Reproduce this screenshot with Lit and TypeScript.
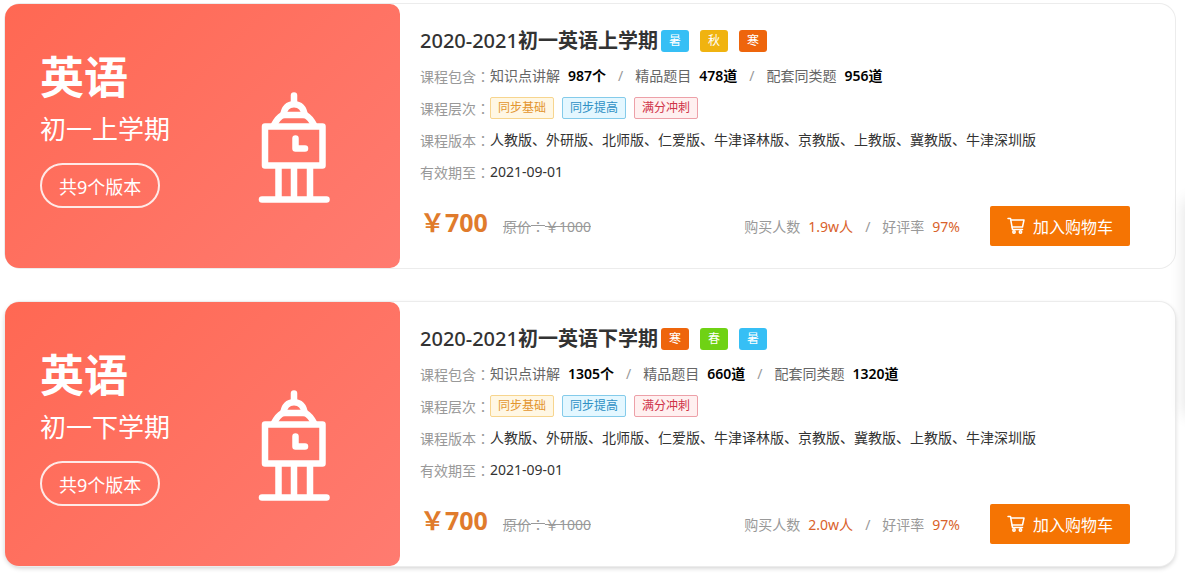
import { LitElement, html, css, svg } from "lit";
import { customElement, property } from "lit/decorators.js";

type Season = "summer" | "autumn" | "winter" | "spring";

interface Course {
  term: string;
  years: string;
  title: string;
  seasons: Season[];
  contents: { name: string; count: string }[];
  editions: string;
  buyers: string;
  raised?: boolean;
}

const SEASON_TEXT: Record<Season, string> = {
  summer: "暑",
  autumn: "秋",
  winter: "寒",
  spring: "春",
};

const COURSES: Course[] = [
  {
    term: "初一上学期",
    years: "2020-2021",
    title: "初一英语上学期",
    seasons: ["summer", "autumn", "winter"],
    contents: [
      { name: "知识点讲解", count: "987个" },
      { name: "精品题目", count: "478道" },
      { name: "配套同类题", count: "956道" },
    ],
    editions: "人教版、外研版、北师版、仁爱版、牛津译林版、京教版、上教版、冀教版、牛津深圳版",
    buyers: "1.9w人",
  },
  {
    term: "初一下学期",
    years: "2020-2021",
    title: "初一英语下学期",
    seasons: ["winter", "spring", "summer"],
    contents: [
      { name: "知识点讲解", count: "1305个" },
      { name: "精品题目", count: "660道" },
      { name: "配套同类题", count: "1320道" },
    ],
    editions: "人教版、外研版、北师版、仁爱版、牛津译林版、京教版、冀教版、上教版、牛津深圳版",
    buyers: "2.0w人",
    raised: true,
  },
];

const towerIcon = svg`<g fill="none" stroke="#fff" stroke-width="6.5" stroke-linecap="round" stroke-linejoin="round">
  <path d="M36 3.500V11"/>
  <path d="M25.500 23C26 16 30 12.200 36 12.200S46 16 46.500 23"/>
  <path d="M16 33C18.500 28 21 25 24.500 23H47.500C51 25 53.500 28 56 33"/>
  <path d="M7 34.500H64.500V73.500H7Z"/>
  <path d="M37.500 46.500V56.500H47"/>
  <path d="M20.500 75V105M36 75V105M52 75V105"/>
  <path d="M4 107.500H68.500"/>
</g>`;

const cartIcon = svg`<g fill="none" stroke="currentColor" stroke-width="1.500" stroke-linecap="round" stroke-linejoin="round">
  <path d="M1 1.500H3.500L5.500 12.500H15.500"/>
  <path d="M4 3H17L15.500 10H5"/>
  <circle cx="7" cy="15" r="1.200"/>
  <circle cx="13.500" cy="15" r="1.200"/>
</g>`;

@customElement("course-card")
export class CourseCard extends LitElement {
  @property({ attribute: false }) course!: Course;

  static styles = css`
    :host {
      display: block;
    }
    .card {
      display: grid;
      grid-template-columns: 395px minmax(0, 1fr);
      border-radius: 16px;
      background: #fff;
      box-shadow: 0 0 0 1px #ececec;
    }
    .raised {
      box-shadow: 0 0 0 1px #ececec, 0 2px 5px rgba(0, 0, 0, 0.2);
    }
    .cover {
      display: flex;
      justify-content: space-between;
      padding: 43px 70px 0 35px;
      border-radius: 14px 10px 10px 14px;
      background: linear-gradient(135deg, #ff6853, #ff7b70);
      color: #fff;
    }
    .subject {
      margin: 0;
      font-size: 44px;
      line-height: 60px;
      font-weight: 700;
    }
    .term {
      margin: 0 0 12px;
      font-size: 26px;
      line-height: 44px;
    }
    .versions {
      display: inline-block;
      padding: 3px 17px 0;
      border: 2px solid rgba(255, 255, 255, 0.85);
      border-radius: 23px;
      font-size: 18px;
      line-height: 38px;
    }
    .tower {
      width: 72px;
      height: 112px;
      margin-top: 45px;
      flex: none;
    }
    .info {
      padding: 18px 45px 22px 20px;
      font-size: 14px;
      color: #333;
    }
    .heading {
      display: flex;
      align-items: center;
      height: 38px;
    }
    .title {
      margin: 0 3px 0 0;
      font-size: 20px;
      line-height: 38px;
      font-weight: 600;
    }
    .years {
      font-weight: 500;
    }
    .seasons {
      display: flex;
      gap: 11px;
    }
    .season {
      width: 28px;
      border-radius: 3px;
      color: #fff;
      font-size: 12px;
      line-height: 22px;
      text-align: center;
    }
    .summer {
      background: #36bff5;
    }
    .autumn {
      background: #f0b310;
    }
    .winter {
      background: #ee650c;
    }
    .spring {
      background: #6fd214;
    }
    .row {
      display: flex;
      align-items: center;
      height: 32px;
      line-height: 32px;
      white-space: nowrap;
    }
    .label {
      color: #999;
    }
    .colon {
      font-family: "Noto Sans CJK TC", sans-serif;
    }
    .name {
      color: #666;
    }
    .count {
      margin-left: 8px;
      color: #000;
      font-weight: 600;
    }
    .slash {
      margin: 0 12px;
      color: #999;
    }
    .levels {
      display: flex;
      gap: 8px;
    }
    .level {
      padding: 0 7px;
      border: 1px solid;
      border-radius: 2px;
      font-size: 12px;
      line-height: 20px;
    }
    .basic {
      color: #e3952f;
      background: #fff7e4;
      border-color: #f7d58e;
    }
    .advance {
      color: #2d8fc4;
      background: #e4f7ff;
      border-color: #84cbea;
    }
    .sprint {
      color: #cf3348;
      background: #fff0f0;
      border-color: #eda0a8;
    }
    .buy {
      display: flex;
      align-items: flex-start;
      justify-content: space-between;
      margin-top: 18px;
    }
    .prices,
    .stats {
      display: flex;
      align-items: baseline;
    }
    .price {
      color: #e07b2c;
      font-size: 25px;
      line-height: 32px;
      font-weight: 700;
    }
    .old {
      margin-left: 15px;
      color: #999;
    }
    .side {
      display: flex;
      align-items: center;
      gap: 30px;
    }
    .stats {
      color: #999;
    }
    .figure {
      margin-left: 8px;
      color: #d9622b;
    }
    .cart {
      display: flex;
      align-items: center;
      justify-content: center;
      gap: 8px;
      width: 140px;
      height: 40px;
      padding: 0;
      border: 0;
      border-radius: 2px;
      background: #f57403;
      color: #fff;
      font: inherit;
      font-size: 16px;
      cursor: pointer;
    }
    .cart-icon {
      width: 18px;
      height: 18px;
    }
  `;

  private label(text: string) {
    return html`<span class="label">${text}<span class="colon">：</span></span>`;
  }

  render() {
    const c = this.course;
    return html`
      <article class="card ${c.raised ? "raised" : ""}">
        <div class="cover">
          <div>
            <p class="subject">英语</p>
            <p class="term">${c.term}</p>
            <span class="versions">共9个版本</span>
          </div>
          <svg class="tower" viewBox="0 0 72 112" aria-hidden="true">${towerIcon}</svg>
        </div>
        <div class="info">
          <div class="heading">
            <h2 class="title"><span class="years">${c.years}</span>${c.title}</h2>
            <div class="seasons">
              ${c.seasons.map((s) => html`<span class="season ${s}">${SEASON_TEXT[s]}</span>`)}
            </div>
          </div>
          <div class="row">
            ${this.label("课程包含")}
            ${c.contents.map(
              (item, i) => html`${i ? html`<span class="slash">/</span>` : ""}<span class="name">${item.name}</span
                ><span class="count">${item.count}</span>`
            )}
          </div>
          <div class="row">
            ${this.label("课程层次")}
            <div class="levels">
              <span class="level basic">同步基础</span>
              <span class="level advance">同步提高</span>
              <span class="level sprint">满分冲刺</span>
            </div>
          </div>
          <div class="row">${this.label("课程版本")}<span>${c.editions}</span></div>
          <div class="row">${this.label("有效期至")}<span>2021-09-01</span></div>
          <div class="buy">
            <div class="prices">
              <span class="price">￥700</span>
              <s class="old">原价<span class="colon">：</span>￥1000</s>
            </div>
            <div class="side">
              <div class="stats">
                <span>购买人数</span><span class="figure">${c.buyers}</span>
                <span class="slash">/</span>
                <span>好评率</span><span class="figure">97%</span>
              </div>
              <button class="cart" type="button">
                <svg class="cart-icon" viewBox="0 0 18 18" aria-hidden="true">${cartIcon}</svg>
                加入购物车
              </button>
            </div>
          </div>
        </div>
      </article>
    `;
  }
}

@customElement("app-root")
export class AppRoot extends LitElement {
  static styles = css`
    :host {
      display: block;
      overflow: hidden;
      font-family: "Noto Sans", "Noto Sans CJK SC", sans-serif;
    }
    .list {
      display: grid;
      gap: 34px;
      padding: 4px 10px 10px 5px;
    }
    /* Soft shadow cast by the side toolbar docked beyond the right edge. */
    .dock {
      position: fixed;
      top: 200px;
      left: 100%;
      width: 40px;
      height: 215px;
      box-shadow: 0 0 16px rgba(0, 0, 0, 0.12);
    }
  `;

  render() {
    return html`
      <main class="list">
        ${COURSES.map((c) => html`<course-card .course=${c}></course-card>`)}
      </main>
      <div class="dock"></div>
    `;
  }
}
